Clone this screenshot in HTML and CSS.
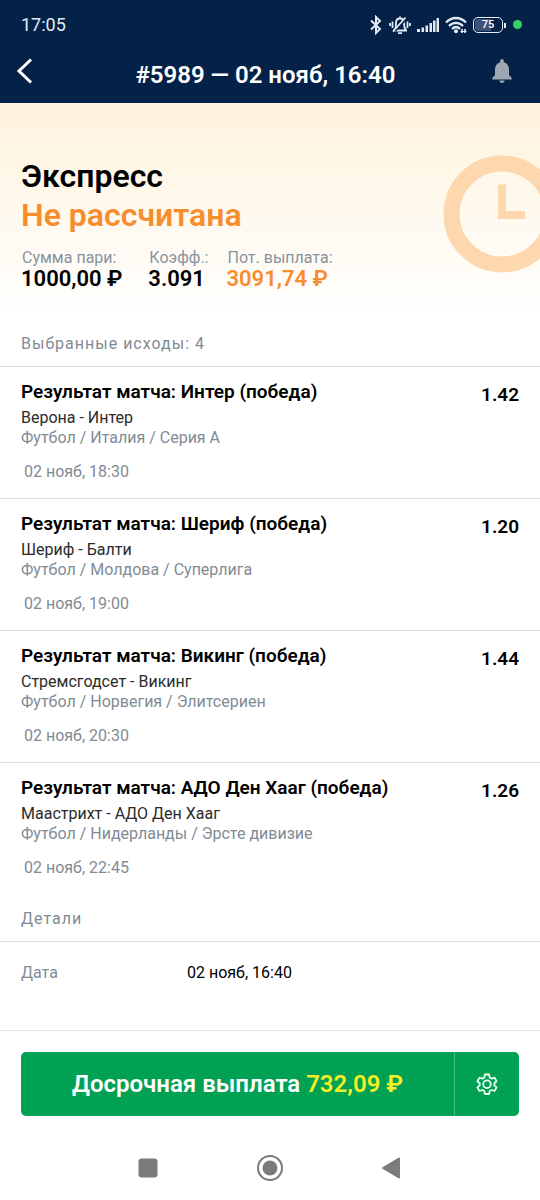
FILE: index.html
```html
<!DOCTYPE html>
<html lang="ru">
<head>
<meta charset="utf-8">
<meta name="viewport" content="width=device-width, initial-scale=1">
<title>Пари #5989</title>
<link rel="stylesheet" href="styles.css">
</head>
<body>
<header class="top">
  <div class="status">
    <time class="clock">17:05</time>
    <div class="status-icons">
      <svg width="14" height="20" viewBox="0 0 14 20" fill="none" stroke="#e3eaf5" stroke-width="2"><path d="M2 5.500l9 8.500-4 4V2l4 4-9 8.500"/></svg>
      <svg width="22" height="20" viewBox="0 0 22 20" fill="none" stroke="#e3eaf5" stroke-width="1.800"><path d="M4 15.500h14M6 15c1-2 1-4 1-7 0-3 2-4.500 4-4.500S15 5 15 8c0 3 0 5 2 7M9 18.200h4M11 1.500v2M3.500 6.500v6.500M1 8v3M18.500 6.500v6.500M21 8v3"/><path d="M6 16L18 3" stroke="#042247" stroke-width="2"/><path d="M4 16.500L16.500 2.500"/></svg>
      <svg width="22" height="20" viewBox="0 0 22 20" fill="#e3eaf5"><path d="M0 14h3v3H0zM4.500 12.500h2.500V17H4.500zM8.500 10.500h2.500V17H8.500zM12.500 8h2.500v9h-2.500zM16 5.500h2.500V17H16zM19.500 3h2.500v14h-2.500z"/></svg>
      <svg width="22" height="20" viewBox="0 0 22 20" fill="none" stroke="#e3eaf5" stroke-width="2.400"><path d="M1 7.500C7 1.500 15 1.500 21 7.500M4 11c4-4.200 10-4.200 14 0M7 14c2.500-2.500 5.500-2.500 8 0"/><circle cx="11" cy="16.200" r="2" fill="#e3eaf5" stroke="none"/><path d="M17 14v4M20 14v4" stroke-width="1.600"/><path d="M15.500 16.500h6" stroke-width="1"/></svg>
      <span class="battery">75</span>
      <span class="dot"></span>
    </div>
  </div>
  <div class="appbar">
    <button class="icon-button back" aria-label="Назад">
      <svg width="18" height="28" viewBox="0 0 18 28" fill="none" stroke="#fff" stroke-width="3"><path d="M16 2.500L4 14l12 11.500"/></svg>
    </button>
    <h1 class="bar-title">#5989 — 02 нояб, 16:40</h1>
    <button class="icon-button bell" aria-label="Уведомления">
      <svg width="20" height="26" viewBox="0 0 20 26" fill="#9ea8b4"><path d="M10 1c1.200 0 1.800.8 1.800 2v1.300C15.300 5.300 17 8 17 11.500V17l2.700 3v1.500H.3V20L3 17v-5.500C3 8 4.700 5.300 8.200 4.300V3C8.200 1.800 8.800 1 10 1zM7.300 22.500h5.400c-.3 1.500-1.300 2.500-2.700 2.500s-2.400-1-2.700-2.500z"/></svg>
    </button>
  </div>
</header>

<main class="content">
  <section class="hero">
    <svg class="hero-clock" width="118" height="118" viewBox="0 0 118 118" fill="none" stroke="#fdd8ae"><circle cx="59" cy="59" r="50.500" stroke-width="16"/><path d="M59 29.500V60H82" stroke-width="8"/></svg>
    <h2 class="kind">Экспресс</h2>
    <p class="state">Не рассчитана</p>
    <dl class="sums">
      <div class="sum stake"><dt>Сумма пари:</dt><dd>1000,00 ₽</dd></div>
      <div class="sum"><dt>Коэфф.:</dt><dd>3.091</dd></div>
      <div class="sum payout"><dt>Пот. выплата:</dt><dd>3091,74 ₽</dd></div>
    </dl>
  </section>

  <section>
    <h3 class="section-title">Выбранные исходы: 4</h3>
    <ul class="bets">
      <li class="bet">
        <div class="bet-info">
          <h4 class="bet-title">Результат матча: Интер (победа)</h4>
          <p class="teams">Верона - Интер</p>
          <p class="league">Футбол / Италия / Серия А</p>
          <time class="date">02 нояб, 18:30</time>
        </div>
        <span class="odds">1.42</span>
      </li>
      <li class="bet">
        <div class="bet-info">
          <h4 class="bet-title">Результат матча: Шериф (победа)</h4>
          <p class="teams">Шериф - Балти</p>
          <p class="league">Футбол / Молдова / Суперлига</p>
          <time class="date">02 нояб, 19:00</time>
        </div>
        <span class="odds">1.20</span>
      </li>
      <li class="bet">
        <div class="bet-info">
          <h4 class="bet-title">Результат матча: Викинг (победа)</h4>
          <p class="teams">Стремсгодсет - Викинг</p>
          <p class="league">Футбол / Норвегия / Элитсериен</p>
          <time class="date">02 нояб, 20:30</time>
        </div>
        <span class="odds">1.44</span>
      </li>
      <li class="bet">
        <div class="bet-info">
          <h4 class="bet-title">Результат матча: АДО Ден Хааг (победа)</h4>
          <p class="teams">Маастрихт - АДО Ден Хааг</p>
          <p class="league">Футбол / Нидерланды / Эрсте дивизие</p>
          <time class="date">02 нояб, 22:45</time>
        </div>
        <span class="odds">1.26</span>
      </li>
    </ul>
  </section>

  <section>
    <h3 class="section-title">Детали</h3>
    <dl class="details">
      <dt>Дата</dt>
      <dd>02 нояб, 16:40</dd>
    </dl>
  </section>
</main>

<footer class="bottom">
  <div class="cashout">
    <button class="cashout-main">Досрочная выплата <span class="amount">732,09 ₽</span></button>
    <button class="cashout-settings" aria-label="Настройки">
      <svg width="24" height="24" viewBox="0 0 24 24" fill="none" stroke="#e6fff0" stroke-width="1.800" stroke-linejoin="round"><path d="M9.900 2.500h4.200l.6 3 1.900 1.100 2.900-1 2.100 3.600-2.300 2v2.200l2.300 2-2.100 3.600-2.900-1-1.900 1.100-.6 2.900H9.900l-.6-2.900L7.400 18l-2.900 1-2.100-3.600 2.300-2v-2.200l-2.300-2 2.100-3.600 2.900 1 1.900-1.100z"/><circle cx="12" cy="12.200" r="3.800"/></svg>
    </button>
  </div>
  <nav class="system-nav" aria-label="Системная навигация">
    <button class="icon-button" aria-label="Недавние">
      <svg width="28" height="28" viewBox="0 0 28 28" fill="#7b7b7b"><rect x="4.500" y="4.500" width="19" height="19" rx="3"/></svg>
    </button>
    <button class="icon-button" aria-label="Домой">
      <svg width="28" height="28" viewBox="0 0 28 28"><circle cx="14" cy="14" r="12" fill="none" stroke="#7b7b7b" stroke-width="2"/><circle cx="14" cy="14" r="7.500" fill="#7b7b7b"/></svg>
    </button>
    <button class="icon-button" aria-label="Назад">
      <svg width="28" height="28" viewBox="0 0 28 28" fill="#7b7b7b" stroke="#7b7b7b" stroke-width="2" stroke-linejoin="round"><path d="M21 4.500v19L5 14z"/></svg>
    </button>
  </nav>
</footer>
</body>
</html>
```
FILE: styles.css
```css
* { box-sizing: border-box; }
body {
  margin: 0;
  min-height: 100vh;
  display: flex;
  flex-direction: column;
  background: #fff;
  color: #000;
  font-family: Roboto, "Noto Sans", sans-serif;
  font-size: 16px;
  line-height: 20px;
}
h1, h2, h3, h4, p, dl, dd, ul { margin: 0; padding: 0; }
ul { list-style: none; }
button { border: 0; padding: 0; background: none; font: inherit; color: inherit; cursor: pointer; }
svg { display: block; }

.top { background: #042247; color: #fff; }
.status {
  display: flex;
  justify-content: space-between;
  align-items: center;
  height: 49px;
  padding: 0 18px 0 21px;
}
.clock { font-size: 18px; color: #e3eaf5; }
.status-icons { display: flex; align-items: center; gap: 6px; }
.battery {
  position: relative;
  width: 30px;
  height: 16px;
  margin-right: 4px;
  border: 1px solid #e3eaf5;
  border-radius: 5px;
  background: linear-gradient(90deg, #3c5278 60%, #042247 60%);
  box-shadow: inset 0 0 0 1px #042247;
  color: #fff;
  font-size: 11px;
  font-weight: 500;
  line-height: 14px;
  text-align: center;
}
.battery::after {
  content: "";
  position: absolute;
  top: 5px;
  right: -4px;
  width: 2px;
  height: 5px;
  background: #e3eaf5;
}
.dot { width: 9px; height: 9px; border-radius: 50%; background: #35cf66; }

.appbar {
  display: grid;
  grid-template-columns: 28px 1fr 28px;
  align-items: center;
  height: 54px;
  padding: 0 24px 10px 15px;
}
.icon-button { display: flex; align-items: center; }
.bell { justify-content: center; }
.bar-title {
  padding: 8px 0 0;
  font-size: 24px;
  font-weight: 600;
  line-height: 28px;
  text-align: center;
}

.content { flex: 1; }
.hero {
  position: relative;
  overflow: hidden;
  padding: 54px 21px 29px;
  background: linear-gradient(#fff3dd, #fff);
}
.hero-clock { position: absolute; top: 52px; right: -21px; }
.kind, .state { font-size: 32px; font-weight: 600; line-height: 39px; }
.state { color: #f68d2e; }
.sums { display: flex; gap: 18px; padding-top: 13px; }
.stake { padding-right: 8px; }
.sum dt { padding-left: 1px; color: #89939d; line-height: 20px; }
.sum dd { font-size: 22px; font-weight: 600; line-height: 22px; }
.payout dd { color: #f68d2e; }

.section-title {
  padding: 15px 21px 12px;
  border-bottom: 1px solid #dcdfe2;
  color: #818b95;
  font-size: 16px;
  font-weight: 400;
  line-height: 20px;
  letter-spacing: 1px;
}
.bet {
  display: flex;
  justify-content: space-between;
  padding: 13px 21px 16px;
}
.bet + .bet { border-top: 1px solid #dcdfe2; }
.bet-title { margin-bottom: 4px; font-size: 19px; font-weight: 600; line-height: 24px; }
.teams { color: #2b2b2b; }
.league { color: #818b95; }
.date { display: block; margin-top: 14px; padding-left: 3px; color: #818b95; }
.odds { padding-top: 3px; font-size: 19px; font-weight: 600; line-height: 24px; }

.details { display: grid; grid-template-columns: 1fr 2fr; padding: 21px 21px 0; }
.details dt { color: #818b95; }

.bottom { border-top: 1px solid #e8e9ea; padding: 21px 21px 18px; }
.cashout {
  display: flex;
  height: 64px;
  border-radius: 5px;
  background: #01a154;
  color: #fff;
}
.cashout-main { flex: 1; font-size: 24px; font-weight: 600; line-height: 28px; }
.amount { color: #f3ee26; }
.cashout-settings {
  display: flex;
  justify-content: center;
  align-items: center;
  width: 65px;
  border-left: 1px solid #4cbd86;
}
.system-nav {
  display: flex;
  justify-content: center;
  gap: 94px;
  padding-top: 38px;
}
```
